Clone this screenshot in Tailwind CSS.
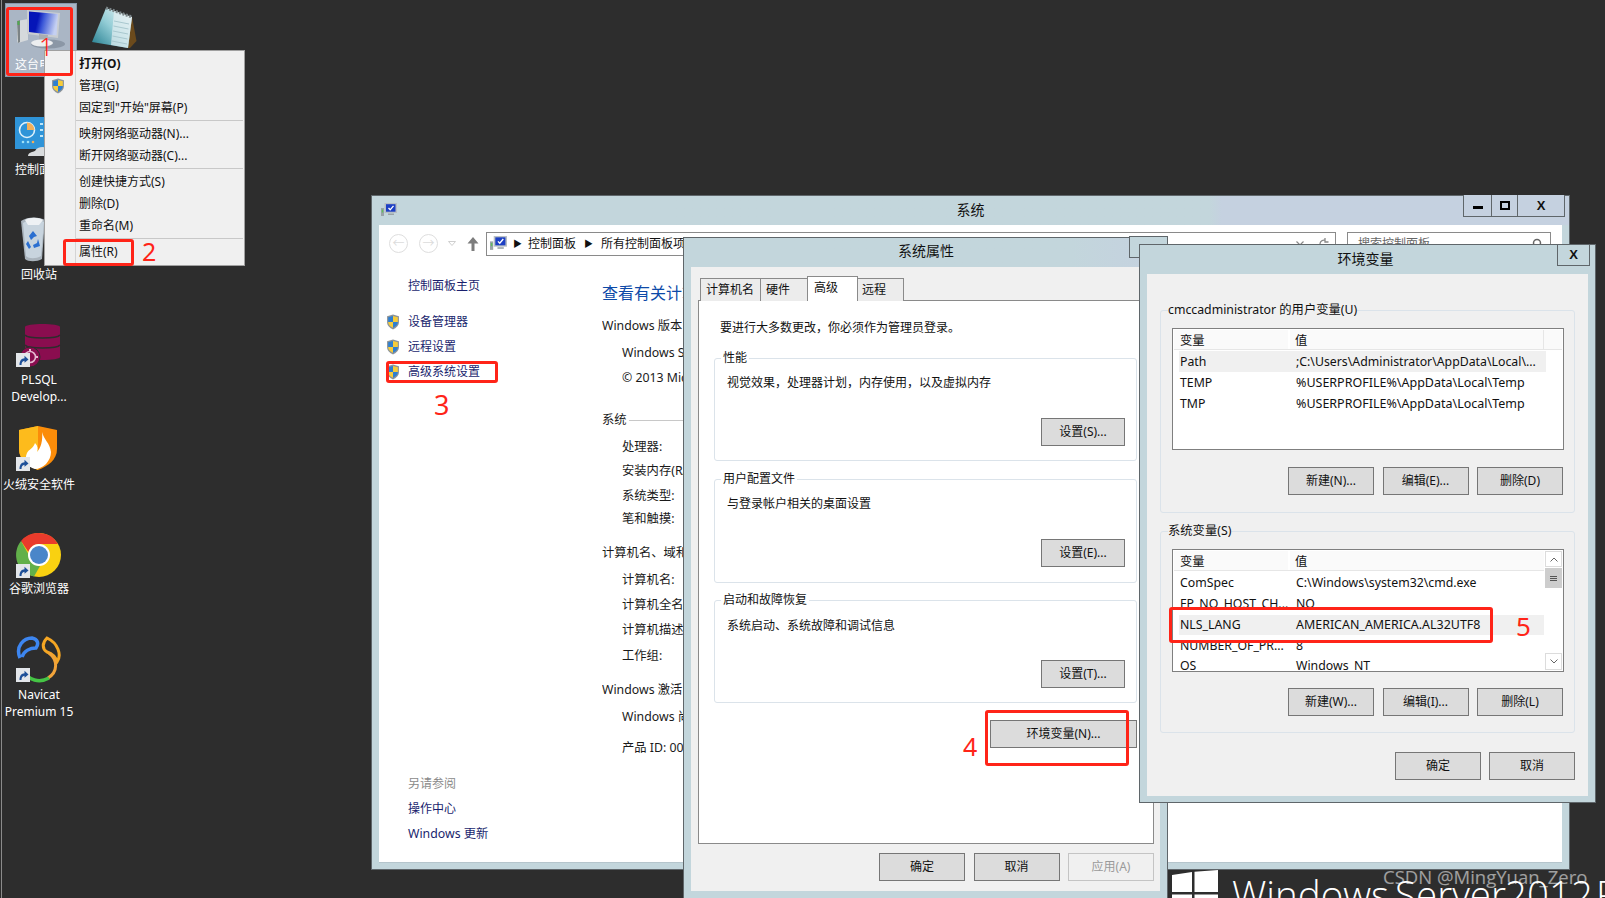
<!DOCTYPE html>
<html lang="zh-CN">
<head>
  <meta charset="UTF-8" />
  <title>环境变量</title>
  <script src="https://cdn.jsdelivr.net/npm/@tailwindcss/browser@4"></script>
</head>
<body class="relative w-[1605px] h-[898px] overflow-hidden bg-[#2d2d2d] text-[12px] leading-5 text-[#111] font-['Noto_Sans','Noto_Sans_CJK_SC',sans-serif]">

  <!-- shared icons -->
  <svg class="absolute w-0 h-0">
    <defs>
      <symbol id="shield" viewBox="0 0 16 18">
        <path d="M8 .5 14.8 2.5V9c0 4-3 6.8-6.8 8.5C4.200 15.800 1.200 13 1.200 9V2.500Z" fill="#8d9499"/>
        <path d="M8 2 8 9H2.500V3.500Z" fill="#2f7fd0"/>
        <path d="M8 2 13.500 3.500V9H8Z" fill="#f6cc3a"/>
        <path d="M2.500 9H8V15.700C4.800 14.300 2.500 12.200 2.500 9Z" fill="#f6cc3a"/>
        <path d="M8 9H13.500C13.500 12.200 11.200 14.300 8 15.700Z" fill="#2f7fd0"/>
      </symbol>
      <symbol id="shortcut" viewBox="0 0 14 14">
        <rect width="14" height="14" fill="#e3e6ea"/>
        <path d="M3.500 12C3.500 7.500 5.500 5.500 8.500 5.200V2.800L12.500 6.500 8.500 9.800V7.800C6.500 8 5.500 9.500 5.500 12Z" fill="#1d4f98"/>
      </symbol>
      <symbol id="pc-small" viewBox="0 0 16 14">
        <rect x="0" y="5" width="3" height="8" fill="#9aa3a8"/>
        <rect x=".8" y="6.500" width="1.400" height="3" fill="#5fbf5f"/>
        <rect x="3.500" y="0" width="12.500" height="10" fill="#b7bec4"/>
        <rect x="5" y="1.200" width="9.500" height="7.500" fill="#1c3fc4"/>
        <path d="M7.500 5 9.200 6.800 12.500 2.800" fill="none" stroke="#fff" stroke-width="1.300"/>
        <rect x="7" y="10.500" width="6" height="1.500" fill="#9aa3a8"/>
      </symbol>
    </defs>
  </svg>

  <!-- wallpaper branding -->
  <div class="absolute left-[1172px] top-[870px] flex items-start gap-[14px] text-white">
    <svg class="w-[46px] h-[34px]" viewBox="0 0 46 34">
      <path d="M0 5 20 2V22H0ZM22.500 1.700 46 0V22H22.500ZM0 24.500H20V34H0ZM22.500 24.500H46V34H22.500Z" fill="#fff"/>
    </svg>
    <div class="mt-[-3px] text-[38.500px] leading-[54px] font-light whitespace-nowrap [word-spacing:-7px] font-['Open_Sans',sans-serif]">Windows <span class="ml-[3px]">Server</span> <span class="-ml-[4px]">2012 R2</span></div>
  </div>

  <!-- desktop icons -->
  <div class="absolute left-[1px] top-0 bottom-0 w-px bg-[#8b8b8b]"></div>
  <div class="absolute left-[5px] top-[3px] w-[72px] h-[74px] bg-[#aab6c5] border border-[#8798ab]"></div>

  <svg class="absolute left-[15px] top-[8px] w-[50px] h-[42px]" viewBox="0 0 50 42">
    <defs>
      <linearGradient id="scr" x1="0" x2="1" y1="0" y2=".2"><stop offset=".35" stop-color="#0515b8"/><stop offset=".55" stop-color="#3c58d8"/><stop offset="1" stop-color="#c5d0f2"/></linearGradient>
    </defs>
    <ellipse cx="33" cy="36" rx="17" ry="4.500" fill="#8b97a6"/>
    <path d="M2 13 13 11V32L3 35 2 33Z" fill="#d5d9dc"/>
    <path d="M2 13 5 12V34L3 35Z" fill="#7c8386"/>
    <rect x="2.500" y="13" width="2" height="4" fill="#4fa94f"/>
    <path d="M12 2 45 5 43 30 12 26Z" fill="#c9cdd1"/>
    <path d="M14 3.500 43 6 41.500 27.500 14 24Z" fill="url(#scr)"/>
    <path d="M24 26 33 27 32 32 24 31Z" fill="#a8adb2"/>
    <ellipse cx="27" cy="35" rx="11" ry="3.500" fill="#eceef0"/>
  </svg>
  <svg class="absolute left-[90px] top-[5px] w-[50px] h-[46px]" viewBox="0 0 50 46">
    <defs><linearGradient id="pad" x1="0" x2="1" y1="1" y2="0"><stop offset="0" stop-color="#1f7a8c"/><stop offset=".5" stop-color="#93cdd6"/><stop offset="1" stop-color="#f2f8f9"/></linearGradient></defs>
    <path d="M42 12 46.500 36 40 43 37 43Z" fill="#6b4a1c"/>
    <path d="M16 3 42 12 38 43 2 37Z" fill="url(#pad)"/>
    <path d="M24 6 42 12 38 43 21 40Z" fill="#e6f0f2" opacity=".7"/>
    <path d="M24 16 39 19M23.500 21 38.500 24M23 26 38 29M22.500 31 37.500 34M22 36 37 39" stroke="#a9c8cf" stroke-width="1"/>
    <path d="M16 3 42 12" stroke="#7d878a" stroke-width="3" stroke-dasharray="2 1.500"/>
  </svg>
  <div class="absolute left-[15px] top-[55px] text-white whitespace-nowrap">这台电脑</div>

  <svg class="absolute left-[15px] top-[117px] w-[46px] h-[40px]" viewBox="0 0 46 40">
    <rect x="0" y="0" width="31" height="32" fill="#2f94d8"/>
    <rect x="31" y="0" width="15" height="32" fill="#4aa4e2"/>
    <circle cx="12" cy="13" r="7.500" fill="none" stroke="#dff1fb" stroke-width="1.600"/>
    <path d="M12 5.500A7.500 7.500 0 0 1 19.500 13H12Z" fill="#f3b05a"/>
    <circle cx="8" cy="25" r="1.300" fill="#9fe0f5"/><circle cx="13" cy="25" r="1.300" fill="#9fe0f5"/><circle cx="18" cy="25" r="1.300" fill="#f3b05a"/>
    <rect x="25" y="6" width="3" height="2" fill="#bfe6f7"/><rect x="30" y="6" width="9" height="2" fill="#bfe6f7"/>
    <rect x="25" y="12" width="3" height="2" fill="#bfe6f7"/><rect x="30" y="12" width="9" height="2" fill="#bfe6f7"/>
    <rect x="25" y="18" width="3" height="2" fill="#bfe6f7"/><rect x="30" y="18" width="9" height="2" fill="#bfe6f7"/>
    <path d="M13 39C13 35 18 35 20 34 22 29 32 29 34 33 38 33 43 36 43 39Z" fill="#d9dcde"/>
  </svg>
  <div class="absolute left-[15px] top-[160px] text-white whitespace-nowrap">控制面板</div>

  <svg class="absolute left-[20px] top-[216px] w-[26px] h-[46px]" viewBox="0 0 26 46">
    <path d="M1 5C8 0 20 1 25 4L22 43C17 46 8 46 5 43Z" fill="#aab4bd"/>
    <path d="M3 7C9 3 19 3 24 6L21 40C16 43 9 43 6 40Z" fill="#c8d4de"/>
    <path d="M5 4C9 1 19 1 23 4L19 9 8 9Z" fill="#eef1f4"/>
    <path d="M9 20 13 15 17 20 14 21 11 24ZM18 23 20 30 14 32 13 29 17 27ZM8 25 11 31 9 33 6 28Z" fill="#2b6fd0"/>
  </svg>
  <div class="absolute left-[1px] top-[265px] w-[76px] text-center text-white">回收站</div>

  <div class="absolute left-[16px] top-[321px] w-[46px] h-[48px]">
    <svg class="absolute left-0 top-0 w-[46px] h-[48px]" viewBox="0 0 46 48">
      <path d="M9 6C9 2 44 2 44 6V36C44 40 9 40 9 36Z" fill="#8a0d4f"/>
      <path d="M9 14C12 18 41 18 44 14M9 24C12 28 41 28 44 24" fill="none" stroke="#2d2d2d" stroke-width="1.500"/>
      <circle cx="14" cy="36" r="10" fill="#8a0d4f" stroke="#2d2d2d" stroke-width="1"/>
      <circle cx="14" cy="36" r="5.500" fill="none" stroke="#e5b9d0" stroke-width="1.600"/>
      <path d="M14 28V31M22 36H19" stroke="#e5b9d0" stroke-width="2"/>
    </svg>
    <svg class="absolute left-0 top-[32px] w-[14px] h-[14px]"><use href="#shortcut"/></svg>
  </div>
  <div class="absolute left-[1px] top-[371px] w-[76px] text-center text-white leading-[17px]">PLSQL<br>Develop...</div>

  <div class="absolute left-[16px] top-[425px] w-[46px] h-[48px]">
    <svg class="absolute left-0 top-0 w-[46px] h-[48px]" viewBox="0 0 46 48">
      <path d="M3 5 22 1 41 5V24C41 35 32 41 22 45 12 41 3 35 3 24Z" fill="#fb8c09"/>
      <path d="M3 5 22 1V45C12 41 3 35 3 24Z" fill="#fdbb1c"/>
      <path d="M26 7C28 15 34 18 35 27 35 36 27 44 19 44 11 42 8 35 11 28 13 24 17 24 19 18 22 21 22 24 21 27 25 23 27 15 26 7Z" fill="#fff"/>
    </svg>
    <svg class="absolute left-0 top-[32px] w-[14px] h-[14px]"><use href="#shortcut"/></svg>
  </div>
  <div class="absolute left-0 top-[475px] w-[78px] text-center text-white whitespace-nowrap">火绒安全软件</div>

  <div class="absolute left-[16px] top-[532px] w-[46px] h-[48px]">
    <svg class="absolute left-0 top-0 w-[46px] h-[46px]" viewBox="0 0 46 46">
      <circle cx="23" cy="23" r="22" fill="#f9d111"/>
      <path d="M23 1A22 22 0 0 1 42 12H23A11 11 0 0 0 12.500 20L5 9A22 22 0 0 1 23 1Z" fill="#e93b2c"/>
      <path d="M5 9 14 25A11 11 0 0 0 24 34L18 44.500A22 22 0 0 1 5 9Z" fill="#62b04a"/>
      <circle cx="23" cy="23" r="11" fill="#fff"/>
      <circle cx="23" cy="23" r="9" fill="#4a86c9"/>
    </svg>
    <svg class="absolute left-0 top-[32px] w-[14px] h-[14px]"><use href="#shortcut"/></svg>
  </div>
  <div class="absolute left-[1px] top-[579px] w-[76px] text-center text-white">谷歌浏览器</div>

  <div class="absolute left-[16px] top-[636px] w-[46px] h-[48px]">
    <svg class="absolute left-0 top-0 w-[46px] h-[48px]" viewBox="0 0 46 48" fill="none">
      <path d="M4 22C-1 10 8 2 16 2 22 3 23 8 20 12 14 12 8 15 6 21" stroke="#3d86f0" stroke-width="3.500"/>
      <path d="M31 2C26 7 26 13 31 16 37 18 40 22 41 26 46 19 42 7 31 2Z" stroke="#f5a623" stroke-width="3"/>
      <path d="M33 17C42 24 42 36 32 42" stroke="#f1a33a" stroke-width="3"/>
      <path d="M33 42C24 47 12 45 7 34" stroke="#45c545" stroke-width="3.500"/>
    </svg>
    <svg class="absolute left-0 top-[32px] w-[14px] h-[14px]"><use href="#shortcut"/></svg>
  </div>
  <div class="absolute left-[1px] top-[686px] w-[76px] text-center text-white leading-[17px] whitespace-nowrap">Navicat<br>Premium 15</div>

  <!-- context menu -->
  <div class="absolute left-[44px] top-[50px] w-[201px] h-[216px] bg-[#f0f0f0] border border-[#a0a0a0] flex flex-col pl-[34px]">
    <div class="absolute left-[30px] top-0 bottom-0 w-px bg-[#d4d4d4]"></div>
    <svg class="absolute left-[6px] top-[27px] w-[14px] h-[16px]"><use href="#shield"/></svg>
    <div class="h-[22px] mt-[1.500px] flex items-center font-bold">打开(O)</div>
    <div class="h-[22px] flex items-center">管理(G)</div>
    <div class="h-[22px] flex items-center">固定到"开始"屏幕(P)</div>
    <div class="h-px bg-[#c8c8c8] my-[1.500px] -ml-[3px] mr-[1px]"></div>
    <div class="h-[22px] flex items-center">映射网络驱动器(N)...</div>
    <div class="h-[22px] flex items-center">断开网络驱动器(C)...</div>
    <div class="h-px bg-[#c8c8c8] my-[1.500px] -ml-[3px] mr-[1px]"></div>
    <div class="h-[22px] flex items-center">创建快捷方式(S)</div>
    <div class="h-[22px] flex items-center">删除(D)</div>
    <div class="h-[22px] flex items-center">重命名(M)</div>
    <div class="h-px bg-[#c8c8c8] my-[1.500px] -ml-[3px] mr-[1px]"></div>
    <div class="h-[22px] flex items-center">属性(R)</div>
  </div>

  <!-- 系统 window -->
  <div class="absolute left-[371px] top-[195px] w-[1199px] h-[675px] border border-[#5f666a] bg-[#c3d6dc] flex flex-col">
    <div class="relative h-[29px] shrink-0 bg-linear-to-r from-[#c3d6dc] from-[70%] to-[#c5d1e0] to-[71%] flex items-center justify-center text-[14px]">
      <svg class="absolute left-[9px] top-[7px] w-[16px] h-[14px]"><use href="#pc-small"/></svg>
      <span class="mb-[2px]">系统</span>
      <div class="absolute right-[4px] top-[-1px] h-[22px] w-[102px] flex border border-[#5f666a] border-t-0 bg-[#c5d1e0]">
        <div class="w-[28px] flex items-center justify-center border-r border-[#5f666a]"><div class="w-[10px] h-[3px] bg-black mt-[3px]"></div></div>
        <div class="w-[26px] flex items-center justify-center border-r border-[#5f666a]"><div class="w-[10px] h-[9px] border-2 border-black"></div></div>
        <div class="flex-1 flex items-center justify-center font-bold text-[13px] font-['Liberation_Sans',sans-serif]">X</div>
      </div>
    </div>
    <div class="flex-1 mx-[7px] mb-[6px] bg-white flex flex-col min-h-0 border-b border-[#b5c5cc]">
      <!-- toolbar -->
      <div class="h-[37px] shrink-0 flex items-center pl-[10px] pr-[11px]">
        <div class="w-[19px] h-[19px] rounded-full border border-[#dedede] flex items-center justify-center text-[#dcdcdc] text-[12px]">←</div>
        <div class="w-[19px] h-[19px] rounded-full border border-[#dedede] flex items-center justify-center text-[#dcdcdc] text-[12px] ml-[11px]">→</div>
        <svg class="w-[8px] h-[5px] ml-[10px]" viewBox="0 0 8 5"><path d="M.5.5H7.500L4 4.500Z" fill="none" stroke="#cfcfcf"/></svg>
        <svg class="w-[12px] h-[14px] ml-[11px]" viewBox="0 0 12 14"><path d="M6 0 11.500 6.500H7.500V14H4.500V6.500H.5Z" fill="#7d7d7d"/></svg>
        <div class="ml-[7px] w-[850px] h-[24px] border border-[#8a8a8a] flex items-center pl-[3px]">
          <svg class="w-[17px] h-[15px]"><use href="#pc-small"/></svg>
          <span class="ml-[6px] text-[9px]">▶</span>
          <span class="ml-[6px]">控制面板</span>
          <span class="ml-[8px] text-[9px]">▶</span>
          <span class="ml-[8px] whitespace-nowrap">所有控制面板项</span>
          <svg class="ml-auto mr-[14px] w-[8px] h-[5px]" viewBox="0 0 8 5" fill="none"><path d="M.5.5 4 4 7.500.5" stroke="#888" stroke-width="1.200"/></svg>
          <svg class="w-[12px] h-[12px] mr-[5px]" viewBox="0 0 12 12" fill="none"><path d="M10 6A4 4 0 1 1 7 2.200M7 0V4H10.500" stroke="#888" stroke-width="1.300"/></svg>
        </div>
        <div class="ml-[11px] flex-1 h-[24px] border border-[#8a8a8a] flex items-center pl-[10px] pr-[7px] text-[#666]">
          <span>搜索控制面板</span>
          <svg class="ml-auto w-[12px] h-[12px]" viewBox="0 0 12 12" fill="none"><circle cx="6" cy="5" r="3.500" stroke="#666" stroke-width="1.500"/></svg>
        </div>
      </div>
      <!-- body -->
      <div class="flex-1 flex min-h-0 text-[#1a1f6e]">
        <div class="w-[223px] shrink-0 flex flex-col pt-[12px] pb-[16px]">
          <div class="h-6 flex items-center pl-[29px]">控制面板主页</div>
          <div class="h-6 mt-[12px] flex items-center pl-[7px] gap-[8px]"><svg class="w-[14px] h-[16px]"><use href="#shield"/></svg>设备管理器</div>
          <div class="h-6 mt-px flex items-center pl-[7px] gap-[8px]"><svg class="w-[14px] h-[16px]"><use href="#shield"/></svg>远程设置</div>
          <div class="h-6 mt-px flex items-center pl-[7px] gap-[8px]"><svg class="w-[14px] h-[16px]"><use href="#shield"/></svg>高级系统设置</div>
          <div class="mt-auto h-6 flex items-center pl-[29px] text-[#8a8a8a]">另请参阅</div>
          <div class="h-[25px] flex items-center pl-[29px]">操作中心</div>
          <div class="h-[25px] flex items-center pl-[29px] text-[12.300px]">Windows 更新</div>
        </div>
        <!-- clipped where the dialog covers it -->
        <div class="w-[81px] shrink-0 overflow-hidden pt-[19px] text-[#1a1a1a] text-[12.300px] whitespace-nowrap">
          <div class="h-6 flex items-center text-[16px] text-[#0d4aa8]">查看有关计算机的基本信息</div>
          <div class="h-6 mt-[9px] flex items-center">Windows 版本</div>
          <div class="h-6 mt-[3px] flex items-center pl-[20px]">Windows Server 2012 R2</div>
          <div class="h-6 mt-[1px] flex items-center pl-[20px]">© 2013 Microsoft Corporation</div>
          <div class="h-6 mt-[18px] flex items-center gap-[2px]">系统<div class="w-[60px] h-px bg-[#c8c8c8]"></div></div>
          <div class="h-6 mt-[3px] flex items-center pl-[20px]">处理器:</div>
          <div class="h-6 flex items-center pl-[20px]">安装内存(RAM):</div>
          <div class="h-6 mt-px flex items-center pl-[20px]">系统类型:</div>
          <div class="h-6 -mt-px flex items-center pl-[20px]">笔和触摸:</div>
          <div class="h-6 mt-[10px] flex items-center">计算机名、域和工作组设置</div>
          <div class="h-6 mt-[3px] flex items-center pl-[20px]">计算机名:</div>
          <div class="h-6 mt-px flex items-center pl-[20px]">计算机全名:</div>
          <div class="h-6 mt-px flex items-center pl-[20px]">计算机描述:</div>
          <div class="h-6 mt-[2px] flex items-center pl-[20px]">工作组:</div>
          <div class="h-6 mt-[10px] flex items-center">Windows 激活</div>
          <div class="h-6 mt-[3px] flex items-center pl-[20px]">Windows 尚未激活</div>
          <div class="h-6 mt-[7px] flex items-center pl-[20px]">产品 ID: 00000</div>
        </div>
      </div>
    </div>
  </div>

  <!-- 系统属性 window -->
  <div class="absolute left-[683px] top-[237px] w-[485px] h-[662px] border border-[#5f666a] bg-[#c3d6dc] flex flex-col">
    <div class="relative h-[29px] shrink-0 bg-linear-to-r from-[#c3d6dc] from-[80%] to-[#c5d1e0] flex items-center justify-center text-[14px]">
      <span class="ml-[1px] mb-[3px]">系统属性</span>
      <div class="absolute right-[-1px] top-[-2px] h-[22px] w-[39px] border border-[#5f666a] bg-[#c3d6dc]"></div>
    </div>
    <div class="flex-1 mx-[7px] mb-[7px] bg-[#f0f0f0] px-[7px] pt-[9px] flex flex-col">
      <div class="flex items-end ml-[2px] h-[25px] relative z-10 -mb-px">
        <div class="w-[61px] h-[23px] bg-[#ececec] border border-b-0 border-[#8a8a8a] pl-[5px] flex items-center">计算机名</div>
        <div class="w-[47px] h-[23px] bg-[#ececec] border border-b-0 border-l-0 border-[#8a8a8a] pl-[5px] flex items-center">硬件</div>
        <div class="w-[51px] h-[25px] bg-white border border-b-0 border-[#8a8a8a] pl-[6px] pb-[2px] flex items-center -ml-px">高级</div>
        <div class="w-[46px] h-[23px] bg-[#ececec] border border-b-0 border-l-0 border-[#8a8a8a] pl-[4px] flex items-center">远程</div>
      </div>
      <div class="w-[456px] h-[544px] bg-white border border-[#8a8a8a] pl-[15px] pt-[17px] flex flex-col items-start">
        <div class="h-5 pl-[6px] whitespace-nowrap">要进行大多数更改，你必须作为管理员登录。</div>
        <fieldset class="w-[423px] h-[111px] mt-[12px] border border-[#dbe3ea] rounded-[3px]">
          <legend class="ml-[6px] px-[2px] h-4 leading-4">性能</legend>
          <div class="px-[12px] pr-[11px]">
            <div class="h-5 mt-[7px]">视觉效果，处理器计划，内存使用，以及虚拟内存</div>
            <div class="mt-[25px] flex justify-end"><button class="w-[84px] h-[28px] bg-[#dcdcdc] border border-[#767676]">设置(S)...</button></div>
          </div>
        </fieldset>
        <fieldset class="w-[423px] h-[112px] mt-[10px] border border-[#dbe3ea] rounded-[3px]">
          <legend class="ml-[6px] px-[2px] h-4 leading-4">用户配置文件</legend>
          <div class="px-[12px] pr-[11px]">
            <div class="h-5 mt-[7px]">与登录帐户相关的桌面设置</div>
            <div class="mt-[25px] flex justify-end"><button class="w-[84px] h-[28px] bg-[#dcdcdc] border border-[#767676]">设置(E)...</button></div>
          </div>
        </fieldset>
        <fieldset class="w-[423px] h-[111px] mt-[9px] border border-[#dbe3ea] rounded-[3px]">
          <legend class="ml-[6px] px-[2px] h-4 leading-4">启动和故障恢复</legend>
          <div class="px-[12px] pr-[11px]">
            <div class="h-5 mt-[8px]">系统启动、系统故障和调试信息</div>
            <div class="mt-[24px] flex justify-end"><button class="w-[84px] h-[28px] bg-[#dcdcdc] border border-[#767676]">设置(T)...</button></div>
          </div>
        </fieldset>
        <button class="w-[147px] h-[28px] mt-[17px] self-end mr-[16px] bg-[#dcdcdc] border border-[#767676]">环境变量(N)...</button>
      </div>
      <div class="w-[456px] flex justify-end gap-[8.500px] mt-[9px]">
        <button class="w-[86px] h-[28px] bg-[#dcdcdc] border border-[#767676]">确定</button>
        <button class="w-[86px] h-[28px] bg-[#dcdcdc] border border-[#767676]">取消</button>
        <button class="w-[86px] h-[28px] bg-[#f0f0f0] border border-[#c4c4c4] text-[#9a9a9a]">应用(A)</button>
      </div>
    </div>
  </div>

  <!-- 环境变量 window -->
  <div class="absolute left-[1139px] top-[244px] w-[457px] h-[559px] border border-[#5f666a] bg-[#c3d6dc] flex flex-col">
    <div class="relative h-[29px] shrink-0 flex items-center justify-center text-[14px]">
      <span class="ml-[-4px] mb-[2px]">环境变量</span>
      <div class="absolute right-[5px] top-[-1px] w-[33px] h-[22px] border border-[#5f666a] border-t-0 flex items-center justify-center font-bold text-[13px] font-['Liberation_Sans',sans-serif]">X</div>
    </div>
    <div class="flex-1 mx-[7px] mb-[6px] bg-[#f0f0f0] px-[13px] pt-[28px] flex flex-col text-[12.300px]">
      <fieldset class="h-[211px] border border-[#dbe3ea] rounded-[3px]">
        <legend class="ml-[7px] h-4 leading-4 whitespace-nowrap">cmccadministrator 的用户变量(U)</legend>
        <div class="pl-[11px]">
          <div class="w-[392px] h-[122px] mt-[10px] border border-[#7f7f7f] bg-white p-px overflow-hidden">
            <div class="flex h-[20px] bg-[#fafafa] border-b border-[#e6e6e6]">
              <div class="w-[116px] pl-[6px] pt-[2px] flex items-center border-r-2 border-white">变量</div>
              <div class="w-[254px] pl-[5px] pt-[2px] flex items-center border-r border-[#e6e6e6]">值</div>
            </div>
            <div class="ml-[5px] w-[367px] mt-px">
              <div class="flex h-[21px] items-center bg-[#f0f0f0]"><div class="w-[117px] pl-[1px]">Path</div><div class="whitespace-nowrap">;C:\Users\Administrator\AppData\Local\...</div></div>
              <div class="flex h-[21px] items-center"><div class="w-[117px] pl-[1px]">TEMP</div><div class="whitespace-nowrap text-[12.500px]">%USERPROFILE%\AppData\Local\Temp</div></div>
              <div class="flex h-[21px] items-center"><div class="w-[117px] pl-[1px]">TMP</div><div class="whitespace-nowrap text-[12.500px]">%USERPROFILE%\AppData\Local\Temp</div></div>
            </div>
          </div>
          <div class="w-[391px] mt-[17px] flex justify-end gap-[8.500px] text-[12px]">
            <button class="w-[86px] h-[28px] bg-[#dcdcdc] border border-[#767676]">新建(N)...</button>
            <button class="w-[86px] h-[28px] bg-[#dcdcdc] border border-[#767676]">编辑(E)...</button>
            <button class="w-[86px] h-[28px] bg-[#dcdcdc] border border-[#767676]">删除(D)</button>
          </div>
        </div>
      </fieldset>
      <fieldset class="h-[210px] mt-[10px] border border-[#dbe3ea] rounded-[3px]">
        <legend class="ml-[7px] h-4 leading-4">系统变量(S)</legend>
        <div class="pl-[11px]">
          <div class="w-[392px] h-[123px] mt-[10px] border border-[#7f7f7f] bg-white p-px overflow-hidden flex">
            <div class="w-[371px] h-[119px] overflow-hidden">
              <div class="flex h-[20px] bg-[#fafafa] border-b border-[#e6e6e6]">
                <div class="w-[116px] pl-[6px] pt-[2px] flex items-center border-r-2 border-white">变量</div>
                <div class="flex-1 pl-[5px] pt-[2px] flex items-center">值</div>
              </div>
              <div class="ml-[5px] mt-[2px]">
                <div class="flex h-[20.750px] items-center"><div class="w-[117px] pl-[1px]">ComSpec</div><div class="whitespace-nowrap">C:\Windows\system32\cmd.exe</div></div>
                <div class="flex h-[20.750px] items-center"><div class="w-[117px] pl-[1px] whitespace-nowrap">FP_NO_HOST_CH...</div><div>NO</div></div>
                <div class="flex h-[20.750px] items-center bg-[#f0f0f0]"><div class="w-[117px] pl-[1px]">NLS_LANG</div><div class="whitespace-nowrap text-[12.450px]">AMERICAN_AMERICA.AL32UTF8</div></div>
                <div class="flex h-[20.750px] items-center"><div class="w-[117px] pl-[1px] whitespace-nowrap">NUMBER_OF_PR...</div><div>8</div></div>
                <div class="flex h-[20.750px] items-center"><div class="w-[117px] pl-[1px]">OS</div><div class="whitespace-nowrap">Windows_NT</div></div>
              </div>
            </div>
            <div class="w-[17px] ml-px flex flex-col">
              <div class="h-[16px] border border-[#dcdcdc] flex items-center justify-center"><svg class="w-[8px] h-[5px]" viewBox="0 0 8 5"><path d="M.5 4.500 4 1 7.500 4.500" fill="none" stroke="#666"/></svg></div>
              <div class="h-[20px] mt-px bg-[#cdcdcd] flex flex-col items-center justify-center gap-px">
                <div class="w-[7px] h-px bg-[#555]"></div><div class="w-[7px] h-px bg-[#555]"></div><div class="w-[7px] h-px bg-[#555]"></div>
              </div>
              <div class="flex-1"></div>
              <div class="h-[17px] border border-[#dcdcdc] flex items-center justify-center"><svg class="w-[8px] h-[5px]" viewBox="0 0 8 5"><path d="M.5.5 4 4 7.500.5" fill="none" stroke="#666"/></svg></div>
            </div>
          </div>
          <div class="w-[391px] mt-[16px] flex justify-end gap-[8.500px] text-[12px]">
            <button class="w-[86px] h-[28px] bg-[#dcdcdc] border border-[#767676]">新建(W)...</button>
            <button class="w-[86px] h-[28px] bg-[#dcdcdc] border border-[#767676]">编辑(I)...</button>
            <button class="w-[86px] h-[28px] bg-[#dcdcdc] border border-[#767676]">删除(L)</button>
          </div>
        </div>
      </fieldset>
      <div class="mt-[19px] flex justify-end gap-[8px] text-[12px]">
        <button class="w-[86px] h-[28px] bg-[#dcdcdc] border border-[#767676]">确定</button>
        <button class="w-[86px] h-[28px] bg-[#dcdcdc] border border-[#767676]">取消</button>
      </div>
    </div>
  </div>

  <!-- red annotations drawn over the screenshot -->
  <div class="absolute left-[6px] top-[7px] w-[67px] h-[69px] border-[3px] border-[#ff2418] rounded-[3px]"></div>
  <div class="absolute left-[63px] top-[239px] w-[71px] h-[27px] border-[3px] border-[#ff2418] rounded-[3px]"></div>
  <div class="absolute left-[386px] top-[361px] w-[112px] h-[22px] border-[3px] border-[#ff2418] rounded-[3px]"></div>
  <div class="absolute left-[985px] top-[710px] w-[144px] h-[56px] border-[3px] border-[#ff2418] rounded-[3px]"></div>
  <div class="absolute left-[1169px] top-[607px] w-[324px] h-[36px] border-[3px] border-[#ff2418] rounded-[3px]"></div>
  <div class="absolute left-[39px] top-[29px] text-[25px] leading-[34px] font-light text-[#ff2418] font-['Noto_Sans',sans-serif]">1</div>
  <div class="absolute left-[142px] top-[234px] text-[25px] leading-[34px] text-[#ff2418] font-['Noto_Sans',sans-serif]">2</div>
  <div class="absolute left-[434px] top-[388px] text-[27px] leading-[34px] text-[#ff2418] font-['Noto_Sans',sans-serif]">3</div>
  <div class="absolute left-[963px] top-[729px] text-[25px] leading-[34px] text-[#ff2418] font-['Noto_Sans',sans-serif]">4</div>
  <div class="absolute left-[1516px] top-[609px] text-[26px] leading-[34px] text-[#ff2418] font-['Noto_Sans',sans-serif]">5</div>

  <div class="absolute left-[1383px] top-[864px] text-[18.500px] leading-[26px] text-white/55 whitespace-nowrap font-['Open_Sans',sans-serif]">CSDN @MingYuan_Zero</div>
</body>
</html>
